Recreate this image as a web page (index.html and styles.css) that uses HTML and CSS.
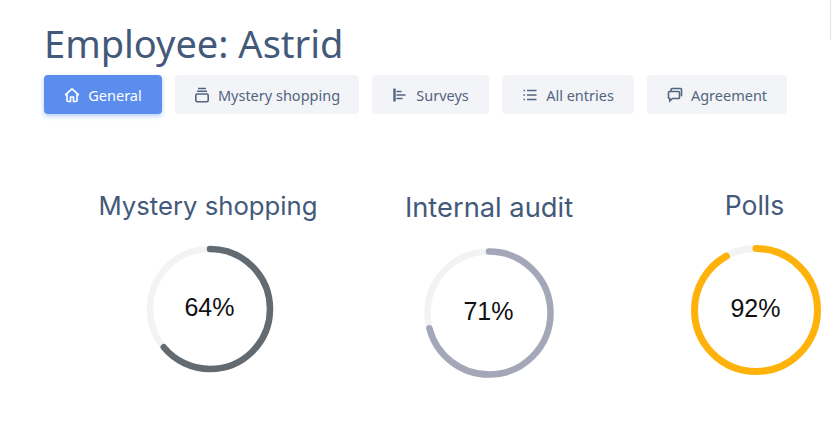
FILE: index.html
```html
<!DOCTYPE html>
<html lang="en">
<head>
  <meta charset="UTF-8">
  <meta name="viewport" content="width=device-width, initial-scale=1.0">
  <title>Employee: Astrid</title>
  <link rel="stylesheet" href="styles.css">
</head>
<body>
  <div class="edge-line"></div>
  <div class="container">
    <h1 class="title">Employee: Astrid</h1>

    <!-- Tabs -->
    <div class="tabs">
      <div class="tab tab-active tab-general">
        <svg class="icon icon-thick" viewBox="0 0 16 16"><path d="M1 8.200 8 1.800l7 6.400M3 6.800v6.700c0 .6.400 1 1 1h2.500v-4.500h3v4.500H12c.6 0 1-.4 1-1V6.800"/></svg>
        General
      </div>
      <div class="tab tab-mystery">
        <svg class="icon icon-thick" viewBox="0 0 16 16"><path d="M4 1.500h8M3 4.200h10"/><rect x="1.800" y="7" width="12.400" height="7.800" rx="1.500"/></svg>
        Mystery shopping
      </div>
      <div class="tab tab-surveys">
        <svg class="icon" viewBox="0 0 16 16"><path class="icon-bar" d="M2.500 1.500v13"/><path d="M4.500 4.500h5M4.500 8h9M4.500 11.500h6"/></svg>
        Surveys
      </div>
      <div class="tab tab-entries">
        <svg class="icon" viewBox="0 0 16 16"><path d="M5 3.500h9.500M5 8h9.500M5 12.500h9.500M1.500 3.500h1.500M1.500 8h1.500M1.500 12.500h1.500"/></svg>
        All entries
      </div>
      <div class="tab tab-agreement">
        <svg class="icon icon-thick" viewBox="0 0 16 16"><path d="M4 4V2.800C4 2 4.500 1.500 5.300 1.500h8.200c.6 0 1 .4 1 1v6.700"/><path d="M2.600 4.500h8.800c.6 0 1.100.5 1.100 1.100v4.800c0 .6-.5 1.100-1.100 1.100H5.500l-2.700 2.500v-2.500c-.8 0-1.300-.5-1.300-1.100V5.600c0-.6.5-1.100 1.100-1.100z"/></svg>
        Agreement
      </div>
    </div>

    <!-- Score circles -->
    <div class="scores">
      <div class="score score-mystery">
        <div class="score-title">Mystery shopping</div>
        <div class="ring">
          <svg viewBox="0 0 128 128">
            <circle class="ring-track" cx="64" cy="64" r="60" stroke-width="6.500"/>
            <circle class="ring-value" cx="64" cy="64" r="60" stroke-width="6.500" pathLength="100" stroke="#636b72" stroke-dasharray="64 100"/>
          </svg>
          <div class="ring-label">64%</div>
        </div>
      </div>
      <div class="score score-audit">
        <div class="score-title">Internal audit</div>
        <div class="ring">
          <svg viewBox="0 0 130 130">
            <circle class="ring-track" cx="65" cy="65" r="61.500" stroke-width="6.500"/>
            <circle class="ring-value" cx="65" cy="65" r="61.500" stroke-width="6.500" pathLength="100" stroke="#a4a7b8" stroke-dasharray="71 100"/>
          </svg>
          <div class="ring-label">71%</div>
        </div>
      </div>
      <div class="score score-polls">
        <div class="score-title">Polls</div>
        <div class="ring">
          <svg viewBox="0 0 130 130">
            <circle class="ring-track" cx="65" cy="65" r="61.500" stroke-width="7"/>
            <circle class="ring-value" cx="65" cy="65" r="61.500" stroke-width="7" pathLength="100" stroke="#ffb30a" stroke-dasharray="92 100"/>
          </svg>
          <div class="ring-label">92%</div>
        </div>
      </div>
    </div>
  </div>
</body>
</html>
```

FILE: styles.css
```css
html, body {
  height: 100%;
}

body {
  margin: 0;
  overflow: hidden;
  background-color: #fff;
  font-family: "Noto Sans", "Liberation Sans", sans-serif;
}

.edge-line {
  position: absolute;
  top: 0;
  right: 0;
  width: 1px;
  height: 40px;
  background-color: #e3e3e3;
}

.container {
  display: flex;
  flex-direction: column;
  padding: 18px 0 0 44px;
}

.title {
  margin: 0;
  font-size: 38px;
  font-weight: 400;
  line-height: 50px;
  color: #43597a;
}

.tabs {
  display: flex;
  gap: 13px;
  margin-top: 7px;
}

.tab {
  display: flex;
  align-items: center;
  justify-content: center;
  gap: 8px;
  height: 39px;
  border-radius: 4px;
  background-color: #f2f4f7;
  font-size: 14.5px;
  color: #536480;
  white-space: nowrap;
}

.tab-active {
  background-color: #5b8def;
  box-shadow: 0 2px 5px rgba(91, 141, 239, 0.45);
  color: #fff;
}

.tab-general { width: 118px; }
.tab-mystery { width: 184px; }
.tab-surveys { width: 117px; }
.tab-entries { width: 132px; }
.tab-agreement { width: 140px; }

.icon {
  width: 16px;
  height: 16px;
  fill: none;
  stroke: currentColor;
  stroke-width: 1.300;
}

.icon-thick {
  stroke-width: 1.600;
}

.icon-bar {
  stroke-width: 2.400;
}

.scores {
  display: flex;
}

.score {
  display: flex;
  flex-direction: column;
  align-items: center;
}

.score-title {
  font-family: "Inter", "Noto Sans", sans-serif;
  line-height: 32px;
  color: #43597a;
  white-space: nowrap;
}

.score-mystery {
  width: 220px;
  margin: 76px 0 0 54px;
  gap: 23px;
}

.score-mystery .score-title { font-size: 25.700px; }
.score-mystery .ring { margin-left: 4px; }

.score-audit {
  width: 220px;
  margin: 78px 0 0 61px;
  gap: 24px;
}

.score-audit .score-title { font-size: 27.300px; }

.score-polls {
  width: 130px;
  margin: 75px 0 0 92px;
  gap: 24px;
}

.score-polls .score-title {
  font-size: 26.500px;
  margin-right: 3px;
}

.ring {
  position: relative;
  width: 128px;
  height: 128px;
}

.score-audit .ring,
.score-polls .ring {
  width: 130px;
  height: 130px;
}

.ring svg {
  display: block;
  width: 100%;
  height: 100%;
  transform: rotate(-90deg);
}

.ring-track {
  fill: none;
  stroke: #f2f3f5;
}

.ring-value {
  fill: none;
  stroke-linecap: round;
}

.ring-label {
  position: absolute;
  inset: 0 1px 3px 0;
  display: flex;
  align-items: center;
  justify-content: center;
  font-family: "Liberation Sans", Arial, sans-serif;
  font-size: 25px;
  color: #111;
}
```
